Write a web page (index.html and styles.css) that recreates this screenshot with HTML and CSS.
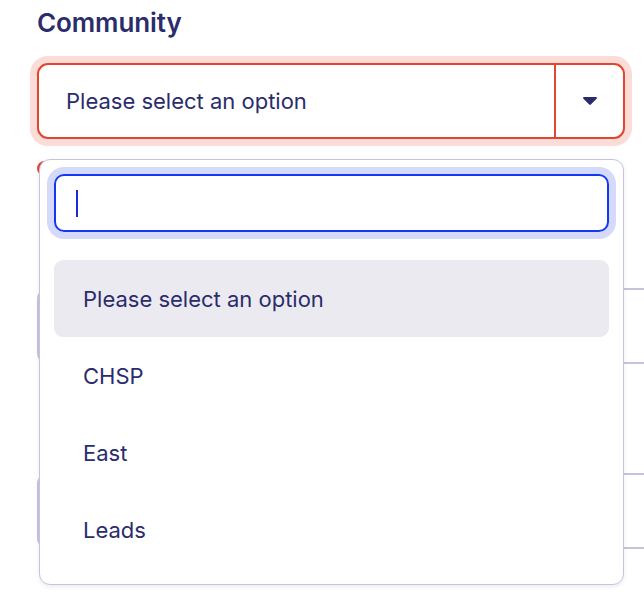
FILE: index.html
```html
<!DOCTYPE html>
<html>
<head>
  <title>Community select</title>
  <link rel="stylesheet" href="styles.css">
</head>
<body>
  <div class="field">
    <h2 class="label">Community</h2>
    <div class="select-wrap">
      <div class="select">
        <span class="select-value">Please select an option</span>
        <span class="select-btn">
          <svg width="14" height="8" viewBox="0 0 14 8" xmlns="http://www.w3.org/2000/svg">
            <path d="M1.2 0 H12.8 C13.8 0 14.3 1.1 13.6 1.8 L7.8 7.6 C7.4 8 6.6 8 6.2 7.6 L0.4 1.8 C-0.3 1.1 0.2 0 1.2 0 Z" fill="#2b2c6b"/>
          </svg>
        </span>
      </div>
      <span class="error-icon"></span>

      <div class="dropdown">
        <div class="search">
          <span class="caret"></span>
        </div>
        <ul class="options">
          <li class="option active">Please select an option</li>
          <li class="option">CHSP</li>
          <li class="option">East</li>
          <li class="option">Leads</li>
        </ul>
      </div>
    </div>
  </div>

  <div class="field first">
    <div class="input"></div>
  </div>

  <div class="field next">
    <div class="input"></div>
  </div>
</body>
</html>
```

FILE: styles.css
```css
html {
  overflow: hidden;
}
body {
  margin: 0;
  min-height: 600px;
  padding: 8px 0 0 37px;
  font-family: Inter, "Noto Sans", sans-serif;
  color: #2b2c6b;
  background: #fff;
}
.field {
  width: 588px;
}
.label {
  margin: 0;
  font-size: 26px;
  line-height: 30px;
  font-weight: 600;
  letter-spacing: -0.1px;
}
.select-wrap {
  position: relative;
  margin-top: 25px;
}
.select {
  display: flex;
  height: 76px;
  box-sizing: border-box;
  border: 2px solid #e0472e;
  border-radius: 11px;
  box-shadow: 0 0 0 7px #fcdcd6;
  background: #fff;
}
.select-value {
  flex: 1;
  display: flex;
  align-items: center;
  padding-left: 27px;
  font-size: 22px;
}
.select-btn {
  width: 67px;
  display: flex;
  align-items: center;
  justify-content: center;
  border-left: 2px solid #e0472e;
}
.error-icon {
  display: block;
  margin-top: 22px;
  width: 15px;
  height: 15px;
  border-radius: 50%;
  background: #e0472e;
}
.dropdown {
  position: absolute;
  top: 96px;
  left: 2px;
  width: 585px;
  box-sizing: border-box;
  padding: 14px 14px 16px;
  border: 1.5px solid #c6c4dc;
  border-radius: 11px;
  background: #fff;
  box-shadow: 0 2px 4px rgba(43, 44, 107, 0.08);
  z-index: 2;
}
.search {
  height: 58px;
  box-sizing: border-box;
  border: 2px solid #1238f2;
  border-radius: 10px;
  box-shadow: 0 0 0 7px #d5d9fb;
  display: flex;
  align-items: center;
  padding-left: 20px;
}
.caret {
  width: 2px;
  height: 27px;
  background: #1a2bd6;
}
.options {
  list-style: none;
  margin: 28px 0 0;
  padding: 0;
}
.option {
  height: 77px;
  display: flex;
  align-items: center;
  padding-left: 29px;
  font-size: 22px;
  border-radius: 9px;
}
.option.active {
  background: #ebeaf1;
}
.first {
  margin-top: 112px;
}
.next {
  margin-top: 109px;
}
.input {
  width: 700px;
  height: 76px;
  box-sizing: border-box;
  border: 2px solid #c6c4dc;
  border-radius: 11px;
}
```
